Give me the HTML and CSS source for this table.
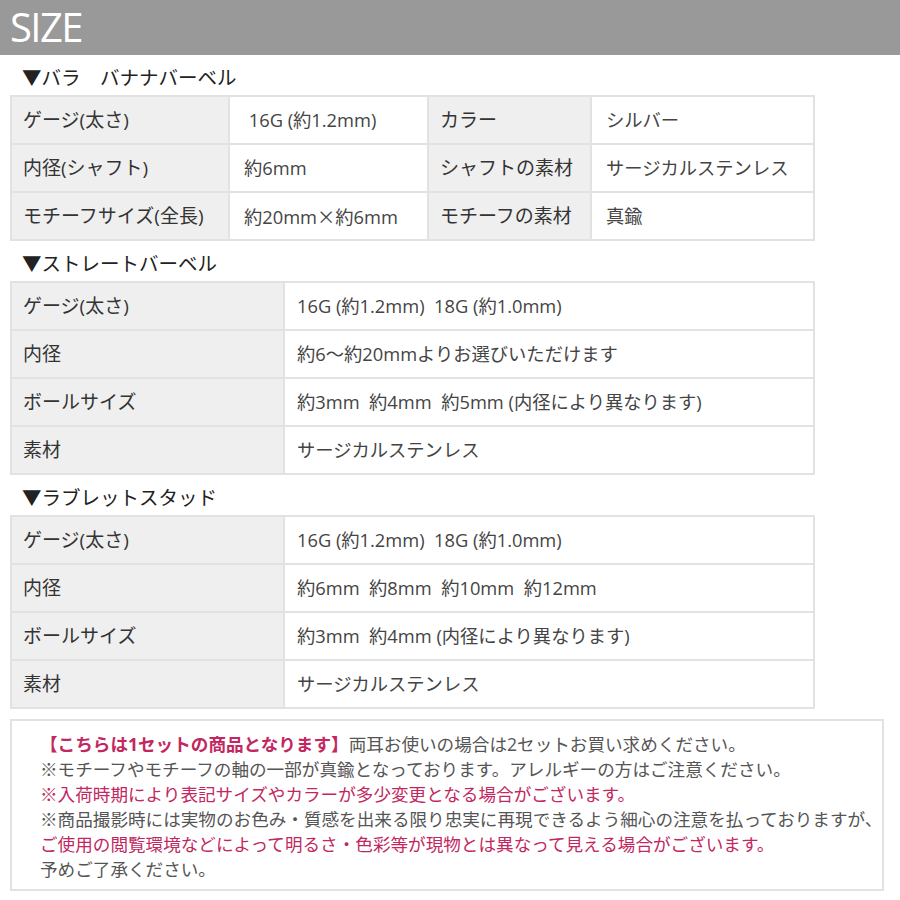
FILE: index.html
```html
<!DOCTYPE html>
<html lang="ja">
<head>
<meta charset="utf-8">
<title>SIZE</title>
<link rel="stylesheet" href="styles.css">
</head>
<body>
<header class="page-head"><h1 class="page-title">SIZE</h1></header>
<main class="content">
  <h2 class="sec-title">▼バラ　バナナバーベル</h2>
  <table class="spec spec-4">
    <colgroup><col class="c1"><col class="c2"><col class="c3"><col class="c4"></colgroup>
    <tr><th>ゲージ(太さ)</th><td>&nbsp;16G (約1.2mm)</td><th>カラー</th><td>シルバー</td></tr>
    <tr><th>内径(シャフト)</th><td>約6mm</td><th>シャフトの素材</th><td>サージカルステンレス</td></tr>
    <tr><th>モチーフサイズ(全長)</th><td>約20mm<span class="cjk">×</span>約6mm</td><th>モチーフの素材</th><td>真鍮</td></tr>
  </table>

  <h2 class="sec-title">▼ストレートバーベル</h2>
  <table class="spec spec-2">
    <colgroup><col class="k"><col class="v"></colgroup>
    <tr><th>ゲージ(太さ)</th><td>16G (約1.2mm)&nbsp; 18G (約1.0mm)</td></tr>
    <tr><th>内径</th><td>約6～約20mmよりお選びいただけます</td></tr>
    <tr><th>ボールサイズ</th><td>約3mm&nbsp; 約4mm&nbsp; 約5mm (内径により異なります)</td></tr>
    <tr><th>素材</th><td>サージカルステンレス</td></tr>
  </table>

  <h2 class="sec-title">▼ラブレットスタッド</h2>
  <table class="spec spec-2">
    <colgroup><col class="k"><col class="v"></colgroup>
    <tr><th>ゲージ(太さ)</th><td>16G (約1.2mm)&nbsp; 18G (約1.0mm)</td></tr>
    <tr><th>内径</th><td>約6mm&nbsp; 約8mm&nbsp; 約10mm&nbsp; 約12mm</td></tr>
    <tr><th>ボールサイズ</th><td>約3mm&nbsp; 約4mm (内径により異なります)</td></tr>
    <tr><th>素材</th><td>サージカルステンレス</td></tr>
  </table>

  <div class="notes">
    <p class="line"><strong class="em">【こちらは1セットの商品となります】</strong>両耳お使いの場合は2セットお買い求めください。</p>
    <p class="line">※モチーフやモチーフの軸の一部が真鍮となっております。アレルギーの方はご注意ください。</p>
    <p class="line pink">※入荷時期により表記サイズやカラーが多少変更となる場合がございます。</p>
    <p class="line">※商品撮影時には実物のお色み・質感を出来る限り忠実に再現できるよう細心の注意を払っておりますが、</p>
    <p class="line pink">ご使用の閲覧環境などによって明るさ・色彩等が現物とは異なって見える場合がございます。</p>
    <p class="line">予めご了承ください。</p>
  </div>
</main>
</body>
</html>
```

FILE: styles.css
```css
* { box-sizing: border-box; }

html, body {
  margin: 0;
  padding: 0;
  background: #ffffff;
}

body {
  font-family: "Open Sans", "Noto Sans CJK JP", sans-serif;
  color: #333;
}

.cjk {
  font-family: "Noto Sans CJK JP", sans-serif;
}

.page-head {
  height: 55px;
  background: #999999;
  display: flex;
  align-items: center;
  padding-left: 10px;
}

.page-title {
  margin: 0;
  font-size: 40px;
  font-weight: 400;
  color: #ffffff;
  line-height: 50px;
  letter-spacing: -1.6px;
  padding-bottom: 1px;
}

.content {
  padding: 0 10px;
}

.sec-title {
  margin: 0;
  padding: 10px 0 4px 12px;
  font-size: 19.5px;
  font-weight: 400;
  line-height: 26px;
  color: #222;
}

.spec {
  border-collapse: collapse;
  table-layout: fixed;
  width: 803px;
  font-size: 18.3px;
}

.spec th,
.spec td {
  border: 2px solid #e2e2e2;
  height: 48px;
  padding: 0 0 0 12px;
  text-align: left;
  vertical-align: middle;
  white-space: nowrap;
  line-height: 24px;
}

.spec th {
  background: #efefef;
  font-weight: 400;
  font-size: 19px;
  color: #333;
  padding-left: 11px;
}

.spec td {
  background: #ffffff;
  color: #444;
}

.spec-4 .c1 { width: 218px; }
.spec-4 .c2 { width: 199px; }
.spec-4 .c3 { width: 163px; }
.spec-4 .c4 { width: 223px; }

.spec-4 td { padding-left: 14px; }

.spec-2 .k { width: 273px; }
.spec-2 .v { width: 530px; }

.notes {
  margin-top: 10px;
  width: 874px;
  border: 2px solid #e2e2e2;
  padding: 11px 0 7px 28px;
  font-size: 17.6px;
  color: #555;
}

.line {
  margin: 0;
  line-height: 25px;
  white-space: nowrap;
}

.em {
  color: #c2285f;
  font-weight: 700;
}

.pink {
  color: #c2285f;
}
```
